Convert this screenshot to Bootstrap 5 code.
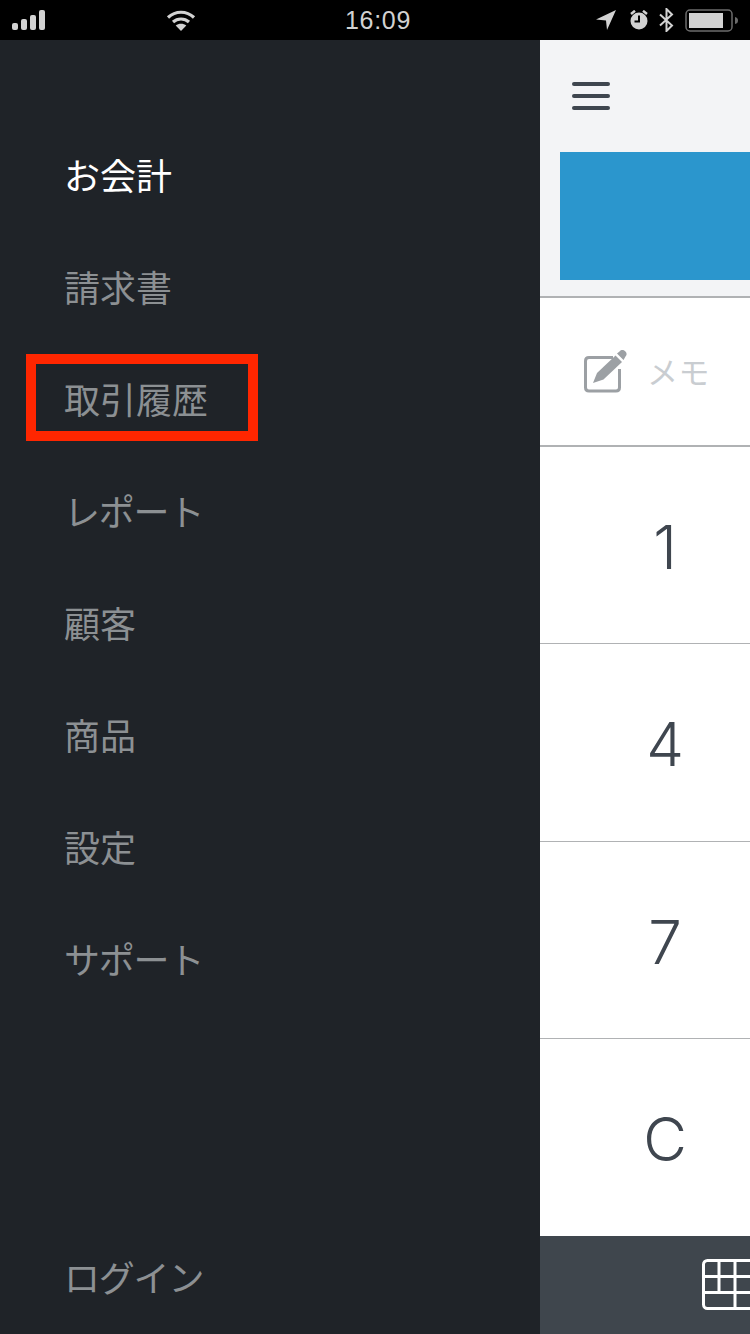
<!DOCTYPE html>
<html lang="ja">
<head>
<meta charset="utf-8">
<title>お会計</title>
<link rel="stylesheet" href="https://cdn.jsdelivr.net/npm/bootstrap@5.3.0/dist/css/bootstrap.min.css">
<style>
html,body{width:750px;height:1334px;overflow:hidden;background:#000;}
body{font-family:"Noto Sans CJK JP","Liberation Sans",sans-serif;}
.app-shell{width:750px;height:1334px;}
.status-strip{height:40px;background:#000;color:#d2d2d2;flex:0 0 40px;}
.status-left{width:303px;padding-left:12px;gap:120px;}
.status-time{font:400 25px/40px "Liberation Sans",sans-serif;width:150px;text-align:center;letter-spacing:.7px;}
.status-right{width:297px;padding-right:11px;}
.stage{height:1294px;}
.drawer{width:540px;flex:0 0 540px;background:#1f2328;padding-top:80px;}
.drawer-link{height:112px;line-height:109px;padding-left:64px;font-size:36px;font-weight:400;color:#8c9093;text-decoration:none;display:block;}
.drawer-link.is-active{color:#fff;}
.kana-tight{letter-spacing:-1.2px;}
.callout{position:absolute;left:26px;top:314px;width:232px;height:87px;border:10px solid #ff2600;}
.pane{width:210px;flex:0 0 210px;background:#fff;overflow:hidden;}
.pane-head{height:258px;flex:0 0 258px;background:#f3f4f6;border-bottom:2px solid #b0b2b4;}
.burger{height:112px;padding-left:32px;}
.burger span{display:block;width:38px;height:4px;border-radius:2px;background:#3f464f;}
.banner{height:128px;margin-left:20px;background:#2b96cd;}
.memo-row{height:149px;flex:0 0 149px;border-bottom:2px solid #b0b2b4;padding-left:44px;gap:19px;}
.memo-text{font-size:31px;color:#c9cdd1;letter-spacing:.5px;font-weight:400;}
.key-row{height:197.25px;flex:0 0 197.25px;width:250px;padding-top:4px;border-bottom:1px solid #b0b2b4;font:300 60px "Inter","Liberation Sans",sans-serif;color:#3f464f;}
.pane-foot{flex:1 1 auto;background:#3f464d;padding-left:162px;padding-top:23px;}
</style>
</head>
<body>
<div class="app-shell d-flex flex-column position-relative">
  <div class="status-strip d-flex align-items-center">
    <div class="status-left d-flex align-items-center">
      <svg width="34" height="20" viewBox="0 0 34 20" fill="#d2d2d2"><rect x="0" y="13" width="6" height="7" rx="2"/><rect x="9" y="9" width="6" height="11" rx="2"/><rect x="18" y="5" width="6" height="15" rx="2"/><rect x="27" y="0" width="6" height="20" rx="2"/></svg>
      <svg width="30" height="22" viewBox="0 0 30 22" fill="none" stroke="#d2d2d2" stroke-width="3.2"><path d="M2 8.500C9.500 1.500 20.500 1.500 28 8.500"/><path d="M7 13C11.500 9 18.500 9 23 13"/><path d="M15 22L9.700 16.500C12.700 14 17.300 14 20.300 16.500Z" fill="#d2d2d2" stroke="none"/></svg>
    </div>
    <div class="status-time">16:09</div>
    <div class="status-right d-flex align-items-center justify-content-end">
      <svg width="20" height="20" viewBox="0 0 20 20" fill="#d2d2d2" style="margin-right:13px"><path d="M20 0L0 9.500L10 10.500L11 20Z"/></svg>
      <svg width="20" height="20" viewBox="0 0 20 20" style="margin-right:10px"><path d="M2 4L6 0.800M18 4L14 0.800" stroke="#d2d2d2" stroke-width="2.500"/><circle cx="10" cy="11" r="8.500" fill="#d2d2d2"/><path d="M10 5.500V11.500H5.500" stroke="#000" stroke-width="2" fill="none"/></svg>
      <svg width="15" height="24" viewBox="0 0 15 24" fill="none" stroke="#d2d2d2" stroke-width="2" style="margin-right:11px"><path d="M1 6.500L13 17.500L7.500 23V1L13 6.500L1 17.500"/></svg>
      <svg width="54" height="23" viewBox="0 0 54 23"><rect x="1" y="1" width="46" height="21" rx="4" fill="none" stroke="#6c6c6c" stroke-width="1.500"/><rect x="4" y="4" width="34" height="15" fill="#d2d2d2"/><path d="M50 8Q53 8.500 53 11.500Q53 14.500 50 15Z" fill="#6c6c6c"/></svg>
    </div>
  </div>
  <div class="stage d-flex position-relative">
    <nav class="drawer d-flex flex-column">
      <a class="drawer-link is-active" href="#">お会計</a>
      <a class="drawer-link" href="#">請求書</a>
      <a class="drawer-link" href="#">取引履歴</a>
      <a class="drawer-link kana-tight" href="#">レポート</a>
      <a class="drawer-link" href="#">顧客</a>
      <a class="drawer-link" href="#">商品</a>
      <a class="drawer-link" href="#">設定</a>
      <a class="drawer-link kana-tight" href="#">サポート</a>
      <a class="drawer-link kana-tight mt-auto" href="#">ログイン</a>
    </nav>
    <div class="callout"></div>
    <main class="pane d-flex flex-column">
      <div class="pane-head">
        <div class="burger d-flex flex-column justify-content-center gap-2"><span></span><span></span><span></span></div>
        <div class="banner"></div>
      </div>
      <div class="memo-row d-flex align-items-center">
        <svg width="44" height="44" viewBox="0 0 44 44"><path d="M29 7.500H5Q1.500 7.500 1.500 11V37.500Q1.500 41 5 41H32Q35.500 41 35.500 37.500V19" fill="none" stroke="#9ca0a4" stroke-width="3"/><path d="M9 33L13 23L31.500 5.500L38 12L19.500 29.500Z" fill="#9ca0a4"/><path d="M33 3.500L35.500 1.500A3.500 3.500 0 0 1 41.500 6.500L39.500 10Z" fill="#9ca0a4"/></svg>
        <span class="memo-text">メモ</span>
      </div>
      <div class="key-row d-flex align-items-center justify-content-center">1</div>
      <div class="key-row d-flex align-items-center justify-content-center">4</div>
      <div class="key-row d-flex align-items-center justify-content-center">7</div>
      <div class="key-row d-flex align-items-center justify-content-center border-0">C</div>
      <div class="pane-foot">
        <svg width="60" height="51" viewBox="0 0 60 51" fill="none" stroke="#fff" stroke-width="3"><rect x="1.500" y="1.500" width="62" height="48" rx="4"/><path d="M0 17.500H60M0 33.500H60M17 1.500V33.500M33 1.500V49.500"/></svg>
      </div>
    </main>
  </div>
</div>
<script src="https://cdn.jsdelivr.net/npm/bootstrap@5.3.0/dist/js/bootstrap.bundle.min.js"></script>
</body>
</html>
